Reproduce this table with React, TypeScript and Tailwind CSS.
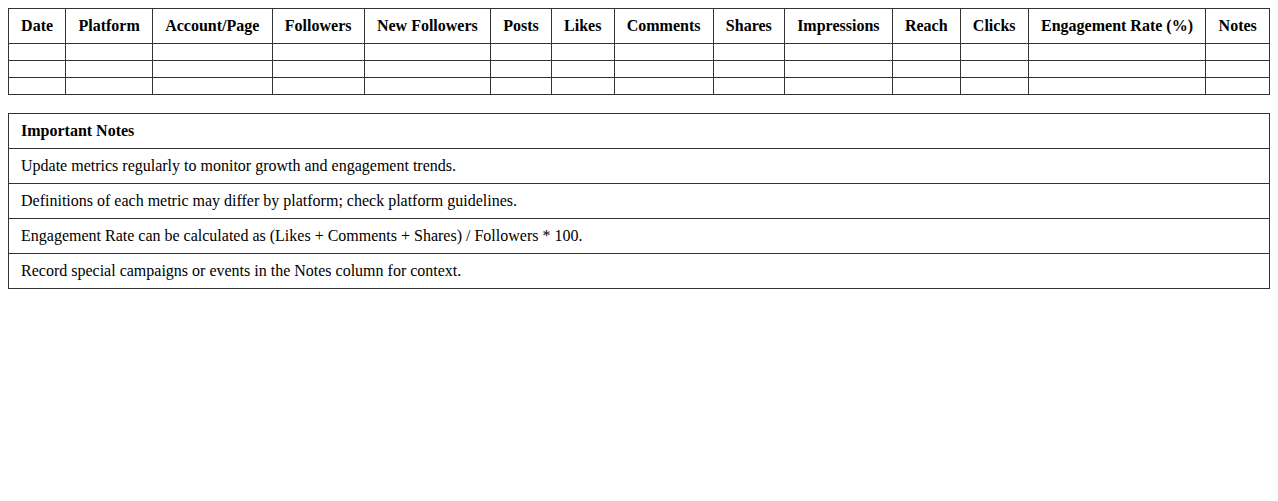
import React from "react";

const headers = [
  "Date",
  "Platform",
  "Account/Page",
  "Followers",
  "New Followers",
  "Posts",
  "Likes",
  "Comments",
  "Shares",
  "Impressions",
  "Reach",
  "Clicks",
  "Engagement Rate (%)",
  "Notes",
];

const notes = [
  "Update metrics regularly to monitor growth and engagement trends.",
  "Definitions of each metric may differ by platform; check platform guidelines.",
  "Engagement Rate can be calculated as (Likes + Comments + Shares) / Followers * 100.",
  "Record special campaigns or events in the Notes column for context.",
];

export default function App() {
  return (
    <div className="p-2 bg-white text-black text-[16px] leading-[normal]" style={{ fontFamily: '"Liberation Serif", "Times New Roman", serif' }}>
      <table className="w-full border-collapse">
        <thead>
          <tr>
            {headers.map((h) => (
              <th key={h} className="border border-[#333] px-3 py-2 font-bold text-center">
                {h}
              </th>
            ))}
          </tr>
        </thead>
        <tbody>
          {[0, 1, 2].map((r) => (
            <tr key={r}>
              {headers.map((h) => (
                <td key={h} className="border border-[#333] px-3 py-2"></td>
              ))}
            </tr>
          ))}
        </tbody>
      </table>
      <table className="w-full border-collapse mt-[18px]">
        <thead>
          <tr>
            <th className="border border-[#333] px-3 py-2 font-bold text-left">Important Notes</th>
          </tr>
        </thead>
        <tbody>
          {notes.map((n) => (
            <tr key={n}>
              <td className="border border-[#333] px-3 py-2">{n}</td>
            </tr>
          ))}
        </tbody>
      </table>
    </div>
  );
}
